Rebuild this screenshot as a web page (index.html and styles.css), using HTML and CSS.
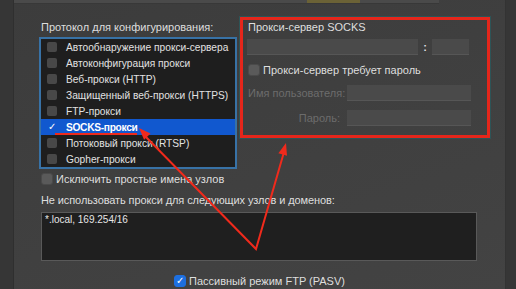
FILE: index.html
```html
<!DOCTYPE html>
<html lang="ru">
	<head>
		<meta charset="UTF-8" />
		<meta name="viewport" content="width=device-width, initial-scale=1.0" />
		<title>Прокси</title>
		<link rel="stylesheet" href="styles.css">
	</head>
	<body>
		<div class="screen">
			<div class="pane">
				<div class="tabbar"><span class="tab-on"></span></div>

				<div class="top">
					<div class="protocols">
						<div class="label">Протокол для конфигурирования:</div>
						<ul class="listbox">
							<li><span class="box"></span>Автообнаружение прокси-сервера</li>
							<li><span class="box"></span>Автоконфигурация прокси</li>
							<li><span class="box"></span>Веб-прокси (HTTP)</li>
							<li><span class="box"></span>Защищенный веб-прокси (HTTPS)</li>
							<li><span class="box"></span>FTP-прокси</li>
							<li class="selected"><span class="box">✓</span>SOCKS-прокси</li>
							<li><span class="box"></span>Потоковый прокси (RTSP)</li>
							<li><span class="box"></span>Gopher-прокси</li>
						</ul>
						<div class="check exclude"><span class="cb"></span>Исключить простые имена узлов</div>
					</div>

					<div class="socks">
						<div class="socks-title">Прокси-сервер SOCKS</div>
						<div class="server-row">
							<span class="field host"></span>
							<span class="colon">:</span>
							<span class="field port"></span>
						</div>
						<div class="check needs-pass"><span class="cb"></span>Прокси-сервер требует пароль</div>
						<div class="cred-row">
							<span class="cred-label">Имя пользователя:</span>
							<span class="field cred"></span>
						</div>
						<div class="cred-row pass">
							<span class="cred-label">Пароль:</span>
							<span class="field cred"></span>
						</div>
					</div>
				</div>

				<div class="bypass-label">Не использовать прокси для следующих узлов и доменов:</div>
				<div class="bypass">*.local, 169.254/16</div>

				<div class="check passive"><span class="cb on">✓</span>Пассивный режим FTP (PASV)</div>
			</div>

			<!-- red annotation arrows -->
			<svg class="arrows" width="516" height="289" viewBox="0 0 516 289">
				<line x1="55" y1="134" x2="137" y2="134" stroke="#ee2a1c" stroke-width="2" />
				<polyline points="143,134 256,249 284,152" fill="none" stroke="#f02a1c" stroke-width="2" />
				<polygon points="139,128 150.5,133.5 144.1,139.7" fill="#f02a1c" />
				<polygon points="286,143 287,155.7 278.4,153.3" fill="#f02a1c" />
			</svg>
		</div>
	</body>
</html>
```

FILE: styles.css
```css
* {
	box-sizing: border-box;
	margin: 0;
	padding: 0;
}

body {
	font-family: "Liberation Sans", Arial, sans-serif;
	font-size: 11px;
	color: #dedede;
	background-color: #363636;
	white-space: nowrap;
}

.screen {
	position: relative;
	width: 516px;
	height: 289px;
	overflow: hidden;
	padding-left: 13px;
}

.pane {
	width: 493px;
	height: 289px;
	padding-left: 25px;
	background: linear-gradient(160deg, #3c3c3c, #434343);
	border-left: 1px solid #2f2f2f;
	border-right: 1px solid #333333;
}

.tabbar {
	height: 4px;
	width: 425px;
	margin-left: -25px;
	background-color: #4a4a4a;
	border-bottom: 1px solid #383838;
}

.tab-on {
	display: block;
	width: 53px;
	height: 3px;
	margin-left: 293px;
	background-color: #6b6236;
}

.top {
	display: flex;
	align-items: flex-start;
	margin-top: 13px;
}

/* left column */

.protocols {
	width: 198px;
	flex-shrink: 0;
	margin-top: 3px;
}

.label {
	line-height: 14px;
	padding-left: 2px;
	margin-bottom: 3px;
}

.listbox {
	list-style: none;
	border: 2px solid #3872a6;
	background-color: #1e1e1e;
}

.listbox li {
	display: flex;
	align-items: center;
	height: 16px;
	padding-left: 6px;
	font-size: 10.2px;
	color: #e2e2e2;
}

.listbox .box {
	flex-shrink: 0;
	width: 10px;
	height: 10px;
	margin-right: 9px;
	border-radius: 2px;
	background-color: #484848;
}

.listbox .selected {
	background-color: #1158cf;
	color: #ffffff;
	font-weight: bold;
	letter-spacing: -0.3px;
}

.listbox .selected .box {
	background: none;
	color: #ffffff;
	font-weight: normal;
	font-size: 10px;
	line-height: 10px;
	text-align: center;
}

.check {
	display: flex;
	align-items: center;
	line-height: 14px;
}

.cb {
	flex-shrink: 0;
	width: 12px;
	height: 12px;
	margin-right: 3px;
	border-radius: 3px;
	background-color: #5a5a5a;
	border: 1px solid #4a4a4a;
}

.cb.on {
	background-color: #1d6fe0;
	border-color: #1d6fe0;
	color: #ffffff;
	font-size: 10px;
	line-height: 10px;
	text-align: center;
}

.exclude {
	margin-top: 3px;
	padding-left: 2px;
}

/* socks group */

.socks {
	width: 250px;
	margin-left: 3px;
	padding: 0 0 9px 5px;
	border: 3px solid #e5261b;
	box-shadow: 0 0 0 1px #2c5457;
}

.socks-title {
	line-height: 14px;
}

.server-row {
	display: flex;
	align-items: center;
	margin-top: 5px;
}

.field {
	height: 16px;
	background-color: #4a4a4a;
	border-bottom: 1px solid #565656;
}

.host {
	width: 171px;
	margin-left: -1px;
}

.colon {
	width: 14px;
	text-align: center;
	font-weight: bold;
}

.port {
	width: 37px;
}

.needs-pass {
	margin-top: 8px;
}

.cred-row {
	display: flex;
	margin-top: 8px;
	line-height: 16px;
}

.cred-row.pass {
	margin-top: 9px;
}

.cred-label {
	width: 92px;
	margin-right: 7px;
	text-align: right;
	color: #6c6c6c;
}

.cred {
	width: 124px;
}

/* bottom */

.bypass-label {
	line-height: 14px;
	margin-top: 7px;
	padding-left: 2px;
	letter-spacing: -0.1px;
}

.bypass {
	width: 436px;
	height: 49px;
	margin-top: 5px;
	margin-left: 2px;
	padding: 1px 3px;
	line-height: 12px;
	background-color: #1f1f1f;
	border: 1px solid #595959;
	color: #e6e6e6;
	font-size: 10px;
}

.passive {
	justify-content: center;
	margin-top: 13px;
	padding-right: 25px;
}

.arrows {
	position: absolute;
	left: 0;
	top: 0;
	pointer-events: none;
}
```
